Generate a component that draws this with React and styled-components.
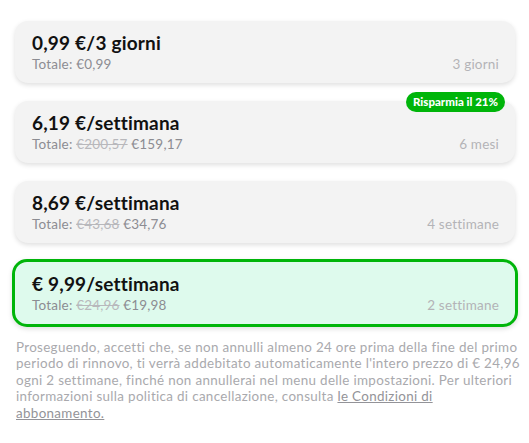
import React from 'react'
import styled, { createGlobalStyle } from 'styled-components'

const GlobalStyle = createGlobalStyle`
  body {
    margin: 0;
    background: #ffffff;
    font-family: Lato, "Noto Sans", sans-serif;
  }
`

const Page = styled.div`
  padding: 21px 14px 0 15px;
  width: 529px;
  box-sizing: border-box;
`

const List = styled.div`
  display: flex;
  flex-direction: column;
  gap: 18px;
`

const Card = styled.div`
  position: relative;
  height: ${p => (p.$selected ? '68px' : '62px')};
  box-sizing: border-box;
  margin: ${p => (p.$selected ? '-2px -3px 0' : '0')};
  padding: 11px 16px 0 17px;
  border-radius: ${p => (p.$selected ? '15px' : '13px')};
  background: ${p => (p.$selected ? '#defaed' : '#f3f3f3')};
  border: ${p => (p.$selected ? '3px solid #00b50a' : 'none')};
  box-shadow: 0 2px 5px rgba(0, 0, 0, 0.13);
  display: flex;
  flex-direction: column;
`

const Title = styled.div`
  font-size: 19px;
  font-weight: 700;
  color: #111111;
  line-height: 22px;
  letter-spacing: 0.2px;
`

const Row = styled.div`
  display: flex;
  justify-content: space-between;
  align-items: baseline;
  margin-top: 2px;
`

const Total = styled.div`
  font-size: 13.5px;
  color: #8c8c92;
  line-height: 16px;
  letter-spacing: 0.2px;
`

const Old = styled.span`
  color: #b8b8bc;
  text-decoration: line-through;
`

const Period = styled.div`
  font-size: 13.5px;
  color: #b3b3b7;
  letter-spacing: 0.2px;
`

const Badge = styled.div`
  position: absolute;
  top: -9px;
  right: 10px;
  height: 20px;
  padding: 0 7px;
  border-radius: 10px;
  background: #00b50a;
  color: #ffffff;
  font-size: 11.5px;
  font-weight: 900;
  line-height: 20px;
  white-space: nowrap;
`

const Footer = styled.p`
  margin: 12px 0 0 1px;
  font-size: 13.4px;
  line-height: 16.4px;
  letter-spacing: 0.33px;
  color: #a9a9ad;
  white-space: nowrap;
`

const Link = styled.a`
  color: #939398;
  text-decoration: underline;
`

const plans = [
  { title: '0,99 €/3 giorni', total: '€0,99', period: '3 giorni' },
  { title: '6,19 €/settimana', old: '€200,57', total: '€159,17', period: '6 mesi', badge: 'Risparmia il 21%' },
  { title: '8,69 €/settimana', old: '€43,68', total: '€34,76', period: '4 settimane' },
  { title: '€ 9,99/settimana', old: '€24,96', total: '€19,98', period: '2 settimane', selected: true },
]

export default function App() {
  return (
    <Page>
      <GlobalStyle />
      <List>
        {plans.map((plan, index) => (
          <Card key={index} $selected={plan.selected}>
            {plan.badge && <Badge>{plan.badge}</Badge>}
            <Title>{plan.title}</Title>
            <Row>
              <Total>
                Totale: {plan.old && <><Old>{plan.old}</Old> </>}{plan.total}
              </Total>
              <Period>{plan.period}</Period>
            </Row>
          </Card>
        ))}
      </List>
      <Footer>
        Proseguendo, accetti che, se non annulli almeno 24 ore prima della fine del primo<br />
        periodo di rinnovo, ti verrà addebitato automaticamente l'intero prezzo di € 24,96<br />
        ogni 2 settimane, finché non annullerai nel menu delle impostazioni. Per ulteriori<br />
        informazioni sulla politica di cancellazione, consulta <Link href="#">le Condizioni di<br />
        abbonamento.</Link>
      </Footer>
    </Page>
  )
}
